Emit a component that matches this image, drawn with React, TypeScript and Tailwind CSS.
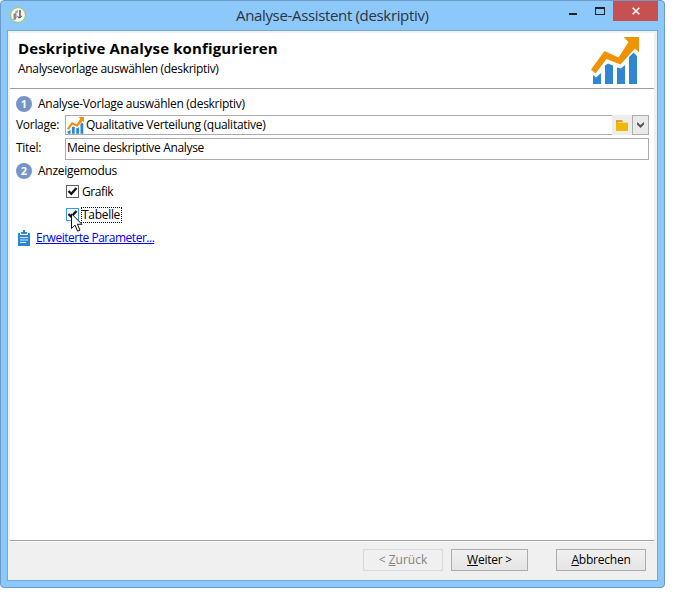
import type { ReactNode } from 'react';

function ChartIcon({ className }: { className: string }) {
  return (
    <svg viewBox="0 0 48 48" className={className}>
      <path
        fill="#3086d0"
        d="M2 47V38L5 40.500L10 36V47ZM14 47V28.500L17 26.500L22 28.500V47ZM26 47V30.500L30 31.500L34 28V47ZM38 47V20L42.500 15.500L46 19V47Z"
      />
      <path fill="#ee9304" d="M32.500 0H48V15.500L44 11.500L29.500 27.500L15.500 22L4.500 36.500L0 32.500L13.500 14L27.500 20.500L37.500 5Z" />
    </svg>
  );
}

function AppIcon() {
  return (
    <svg viewBox="0 0 16 16" className="block h-4 w-4">
      <circle cx="8" cy="8" r="7.400" fill="#f4f4f2" stroke="#a3c655" strokeWidth="1" />
      <path d="M3.500 7L6 5.500V12.500L3.500 13Z" fill="#8b8b8b" />
      <path d="M5 4.500L8 3V5.500L6 6.500Z" fill="#a5a5a5" />
      <path d="M6.500 7V11" stroke="#bbb" strokeWidth="1" />
      <path d="M10 3V11" stroke="#333" strokeWidth="1.200" />
      <path d="M10 10.500C8.500 11.500 7.600 10.500 8 9M10.500 10L12 9" stroke="#555" strokeWidth="1" fill="none" />
    </svg>
  );
}

function Step({ n, children }: { n: number; children: ReactNode }) {
  return (
    <div className="flex h-4 items-center">
      <span className="flex h-4 w-4 items-center justify-center rounded-full bg-[#7595c6] text-[11px] leading-4 font-bold text-white">
        {n}
      </span>
      <span className="ml-1.5 tracking-[-0.28px] whitespace-nowrap">{children}</span>
    </div>
  );
}

function Check({ active }: { active?: boolean }) {
  return (
    <span
      className={`mb-px flex h-[13px] w-[13px] items-center justify-center border bg-white ${
        active ? 'border-[#3399ff]' : 'border-[#606060]'
      }`}
    >
      <svg viewBox="0 0 11 11" className="h-[11px] w-[11px]">
        <path d="M1.500 5L4.300 7.800L9.500 2" fill="none" stroke="#111" strokeWidth="2.300" />
      </svg>
    </span>
  );
}

function Cursor() {
  return (
    <svg viewBox="0 0 12 19" className="absolute top-[6px] left-[5px] h-[19px] w-3">
      <path d="M.5.8V15.500L4 12.200L6.600 18.200L9 17.200L6.400 11.300H11Z" fill="#fff" stroke="#111" strokeWidth="1" />
    </svg>
  );
}

function Clipboard() {
  return (
    <svg viewBox="0 0 12 16" className="block h-4 w-3">
      <path d="M0 3H12V16H0Z" fill="#2f86d1" />
      <path d="M2 3H10V5H2Z" fill="#fff" />
      <path d="M3 2H5V0H7V2H9V4H3Z" fill="#2f86d1" />
      <path d="M2 7.500H10M2 10H10M2 12.500H8" stroke="#d5e8f8" strokeWidth="1" />
    </svg>
  );
}

const button =
  'flex h-[22px] items-center justify-center border border-[#acacac] bg-linear-to-b from-[#f0f0f0] to-[#e5e5e5] whitespace-nowrap pb-px';

export default function App() {
  return (
    <div className="h-[602px] w-[685px] overflow-hidden bg-white font-['Open_Sans','Noto_Sans',sans-serif] text-[12px] leading-4 text-black">
      <div className="flex h-[588px] w-[665px] flex-col rounded-[4px] border border-[#6a9bc9] bg-[#8dc8fa] px-1.5 pb-1.5">
        <div className="flex h-[29px] shrink-0 items-start">
          <div className="mt-1.5 ml-[3px]">
            <AppIcon />
          </div>
          <div className="mt-1 ml-[210px] w-[193px] text-[15px] leading-5 tracking-[-0.34px] whitespace-nowrap text-[#2b3440]">
            Analyse-Assistent (deskriptiv)
          </div>
          <div className="mt-3 ml-[140px] h-0.5 w-2 bg-[#222]" />
          <div className="mt-1.5 ml-[18px] h-2 w-2.5 border border-t-2 border-[#222]" />
          <div className="ml-2 flex h-5 w-[45px] items-center justify-center bg-[#c75050]">
            <svg viewBox="0 0 8 8" className="h-2 w-2">
              <path d="M.7.7L7.300 7.300M7.300.7L.7 7.300" stroke="#fff" strokeWidth="1.600" />
            </svg>
          </div>
        </div>

        <div className="flex min-h-0 flex-1 flex-col border border-[#73a8dc] bg-[#f0f0f0] pt-0.5 pr-[3px] pl-0.5">
          <div className="flex h-14 shrink-0 justify-between border-b border-[#a0a0a0] bg-white pr-[15px] pl-2">
            <div>
              <div className="mt-[5px] text-[15px] leading-5 font-bold tracking-[0.13px] whitespace-nowrap">
                Deskriptive Analyse konfigurieren
              </div>
              <div className="mt-[3px] tracking-[-0.32px] whitespace-nowrap">Analysevorlage auswählen (deskriptiv)</div>
            </div>
            <ChartIcon className="mt-1 h-12 w-12" />
          </div>

          <div className="flex h-[451px] shrink-0 flex-col bg-white pt-[7px] pr-[5px] pl-1.5">
            <Step n={1}>Analyse-Vorlage auswählen (deskriptiv)</Step>
            <div className="mt-[3px] flex h-5 items-center">
              <span className="w-[49px] shrink-0 pb-px tracking-[-0.3px]">Vorlage:</span>
              <div className="flex h-5 flex-1 items-center border-y border-l border-[#acacb0] pl-px">
                <ChartIcon className="h-[17px] w-[17px]" />
                <span className="ml-0.5 pb-px tracking-[-0.27px]">Qualitative Verteilung (qualitative)</span>
              </div>
              <div className="flex h-5 w-5 items-center justify-center bg-[#ededed]">
                <svg viewBox="0 0 12 11" className="h-[11px] w-3">
                  <path d="M0 0H6L7 2H12V4H0Z" fill="#e89a2c" />
                  <path d="M2 2H12V4H2Z" fill="#f5d98b" />
                  <path d="M0 3H12V11H0Z" fill="#f0b800" />
                </svg>
              </div>
              <div className="flex h-5 w-[17px] items-center justify-center border border-[#acacac] bg-[#eaeaea]">
                <svg viewBox="0 0 7 6" className="h-1.5 w-[7px]">
                  <path d="M0 0L3.500 3L7 0V2.500L3.500 6L0 2.500Z" fill="#555" />
                </svg>
              </div>
            </div>
            <div className="mt-[3px] flex h-[22px]">
              <span className="mt-0.5 w-[49px] shrink-0 tracking-[-0.3px]">Titel:</span>
              <div className="flex-1 border border-[#acacb0] pt-px pl-[1px] tracking-[-0.34px]">Meine deskriptive Analyse</div>
            </div>
            <div className="mt-[3px]">
              <Step n={2}>Anzeigemodus</Step>
            </div>
            <div className="mt-[5px] ml-[50px] flex h-4 items-center">
              <Check />
              <span className="ml-[3px] tracking-[-0.4px]">Grafik</span>
            </div>
            <div className="relative mt-[7px] ml-[50px] flex h-4 items-center">
              <Check active />
              <span className="ml-0.5 flex h-4 w-[41px] items-center border border-dotted border-black tracking-[-0.3px]">
                Tabelle
              </span>
              <Cursor />
            </div>
            <div className="mt-[7px] ml-0.5 flex h-4 items-center">
              <Clipboard />
              <a className="ml-1.5 tracking-[-0.48px] text-[#0000ff] underline">Erweiterte Parameter...</a>
            </div>
          </div>

          <div className="flex h-10 shrink-0 border-t border-[#a0a0a0]">
            <div className="flex flex-1 items-start justify-end border-t border-white pt-[7px] pr-2">
              <div className="flex h-[22px] w-20 items-center justify-center border border-[#d9d9d9] pb-px text-[#838383]">
                <span>
                  &lt; <u>Z</u>urück
                </span>
              </div>
              <div className={`ml-2 w-[77px] ${button}`}>
                <span className="tracking-[-0.25px]">
                  <u>W</u>eiter &gt;
                </span>
              </div>
              <div className={`ml-7 w-[90px] ${button}`}>
                <span className="tracking-[-0.22px]">
                  <u>A</u>bbrechen
                </span>
              </div>
            </div>
          </div>
        </div>
      </div>
    </div>
  );
}
